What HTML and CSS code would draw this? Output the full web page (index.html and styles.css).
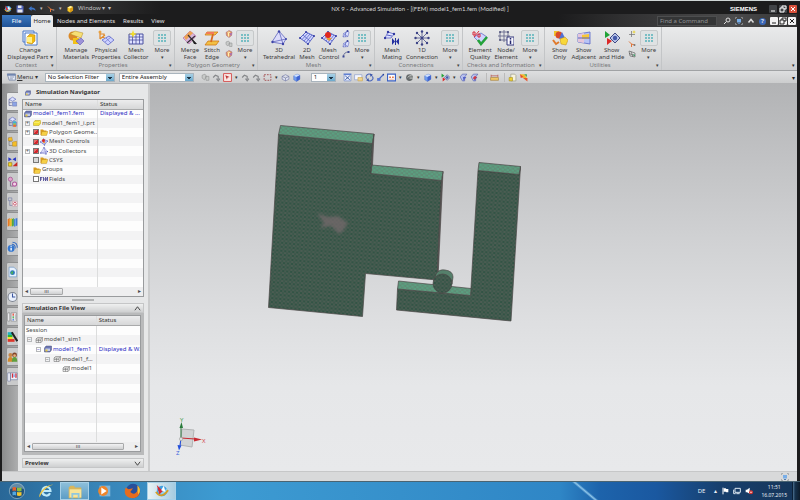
FILE: index.html
```html
<!DOCTYPE html>
<html lang="en">
<head>
<meta charset="utf-8">
<title>NX 9 - Advanced Simulation</title>
<link rel="stylesheet" href="styles.css">
</head>
<body>
<svg class="defs" aria-hidden="true">
  <symbol id="cube" viewBox="0 0 16 16"><path d="M3 5l6-3 5 2v7l-6 4-5-3z" fill="#f5c526" stroke="#a8790d" stroke-width=".6"/><path d="M3 5l5 2 6-3-5-2z" fill="#fff2a0"/><path d="M8 7v8l6-4V4z" fill="#dc9c14"/></symbol>
  <symbol id="bcube" viewBox="0 0 16 16"><path d="M3 5l6-3 5 2v7l-6 4-5-3z" fill="#6f9df0" stroke="#3355b0" stroke-width=".6"/><path d="M3 5l5 2 6-3-5-2z" fill="#cfe0ff"/><path d="M8 7v8l6-4V4z" fill="#3f62cf"/></symbol>
  <symbol id="change" viewBox="0 0 16 16"><path d="M1 1h11v11H1z" fill="#e8efff" stroke="#4a78c8"/><path d="M3 3h12v12H3z" fill="#fff" stroke="#4a78c8"/><path d="M5 7l3-3 5 1v6l-3 3-5-1z" fill="#f2b90f" stroke="#a8790d" stroke-width=".5"/><path d="M5 7h5v6l-5-1z" fill="#fff08a"/></symbol>
  <symbol id="manage" viewBox="0 0 16 16"><circle cx="5" cy="6" r="4.500" fill="#dc8a28"/><path d="M2 4l5-3 8 2-2 5z" fill="#f6df74" stroke="#b58b20" stroke-width=".5"/><path d="M5 8h6v6H5z" fill="#f3c217"/><path d="M8 11l5-3 3 3-4 4z" fill="#9c92d8" stroke="#6158b2" stroke-width=".6"/></symbol>
  <symbol id="physical" viewBox="0 0 16 16"><path d="M4 10l7-4 5 4-6 5z" fill="#cdd2ff" stroke="#6068c8" stroke-width=".8"/><path d="M8 8l5 5M7 12l6-5" stroke="#6068c8" stroke-width=".6"/><path d="M2 1v8M2 4h4v4M2 9l5-4" fill="none" stroke="#e18828" stroke-width="1.200"/><circle cx="2" cy="2" r="1.500" fill="#e8a140"/></symbol>
  <symbol id="collector" viewBox="0 0 16 16"><path d="M1 4h14v10H1z" fill="#dfe2ff" stroke="#4b50a0"/><path d="M1 7h14M1 10h14M4.500 4v10M8 4v10M11.500 4v10" stroke="#4b50a0" stroke-width=".8"/><path d="M5 0l1 3 3 1-3 1-1 3-1-3-3-1 3-1z" fill="#f3dd28"/></symbol>
  <symbol id="more" viewBox="0 0 16 16"><g fill="#2aa3ad"><path d="M3 3h2v2H3zM7 3h2v2H7zM11 3h2v2h-2zM3 7h2v2H3zM7 7h2v2H7zM11 7h2v2h-2zM3 11h2v2H3zM7 11h2v2H7zM11 11h2v2h-2z"/></g></symbol>
  <symbol id="merge" viewBox="0 0 16 16"><path d="M1 8l7-7 6 5-7 8z" fill="#d8b6dc" stroke="#b060a0" stroke-width=".6"/><path d="M2 7l6-6 3 2-7 7z" fill="#eda253"/><path d="M6 5l8 9M13 6l-8 7" stroke="#383038" stroke-width="1.200"/><path d="M9 8l6 6-3 0z" fill="#222"/></symbol>
  <symbol id="stitch" viewBox="0 0 16 16"><path d="M3 2h11l-3 3H1zM4 11h11l-3 4H1z" fill="#f2c044" stroke="#d07818" stroke-width=".8"/><path d="M9 4l-2 8" stroke="#d86a20" stroke-width="1.800"/><path d="M3 2h7v2H2z" fill="#f27a5a"/></symbol>
  <symbol id="ball" viewBox="0 0 16 16"><path d="M2 5l6-4 6 3-1 7-5 4-5-4z" fill="#e6a06c" stroke="#96556c"/><path d="M5 4l5 1M7 6v7" stroke="#fff0b0" stroke-width="2"/><path d="M9 7l5-1-2 6z" fill="#a869b8"/></symbol>
  <symbol id="tetra" viewBox="0 0 16 16"><path d="M8 1L1 12l11 2 3-5z" fill="#dcdcfa" stroke="#6066bd" stroke-width=".8"/><path d="M8 1l4 13M1 12l14-3" stroke="#6066bd" stroke-width=".8"/><g fill="#3d43a8"><circle cx="8" cy="1.500" r="1.200"/><circle cx="1.500" cy="12" r="1.200"/><circle cx="12" cy="14" r="1.200"/><circle cx="15" cy="9" r="1"/></g></symbol>
  <symbol id="mesh" viewBox="0 0 16 16"><path d="M1 8l6-6 8 4-6 8z" fill="#cfd6ff" stroke="#4d58c0" stroke-width=".9"/><path d="M4 5l7 6M5 11l6-7M3 9.500L9 3M7 12.500L13 5" stroke="#4d58c0" stroke-width=".7"/><g fill="#3038a0"><circle cx="1" cy="8" r="1"/><circle cx="7" cy="2" r="1"/><circle cx="15" cy="6" r="1"/><circle cx="9" cy="14" r="1"/></g></symbol>
  <symbol id="control" viewBox="0 0 16 16"><use href="#mesh"/><circle cx="7" cy="5" r="3" fill="#e0281e"/><path d="M5 8l3 3 3-3" fill="#f0a030"/></symbol>
  <symbol id="mating" viewBox="0 0 16 16"><path d="M1 8l3-6 6 2-3 4z" fill="#dfe3ff" stroke="#5a62c4" stroke-width=".8"/><path d="M3 5l5 1" stroke="#5a62c4"/><path d="M8 8v7l3-3.500zM15 8v7l-3-3.500z" fill="#2430a0"/><path d="M11.500 8v7" stroke="#2430a0"/><g fill="#3038a0"><circle cx="1" cy="8" r="1.200"/><circle cx="4" cy="2" r="1.200"/><circle cx="10" cy="4" r="1.200"/></g></symbol>
  <symbol id="star" viewBox="0 0 16 16"><path d="M8 1v14M1 8h14M3 3l10 10M13 3L3 13" stroke="#5d6293" stroke-width=".9"/><g fill="#3b4285"><circle cx="8" cy="1.500" r="1.200"/><circle cx="8" cy="14.500" r="1.200"/><circle cx="1.500" cy="8" r="1.200"/><circle cx="14.500" cy="8" r="1.200"/><circle cx="3" cy="3" r="1.200"/><circle cx="13" cy="3" r="1.200"/><circle cx="3" cy="13" r="1.200"/><circle cx="13" cy="13" r="1.200"/><circle cx="8" cy="8" r="1.500"/></g></symbol>
  <symbol id="quality" viewBox="0 0 16 16"><path d="M2 7l7-4 6 4-6 7z" fill="#cfd3ff" stroke="#5860c0" stroke-width=".7"/><path d="M1 2h2v3H1zM6 4h2v3H6zM7 1L2 7" fill="none" stroke="#d8283c"/><path d="M6 10l3 4 6-7" fill="none" stroke="#23a23a" stroke-width="2.600"/></symbol>
  <symbol id="node" viewBox="0 0 16 16"><path d="M2 2h8v8H2zM6 0v12M0 6h12" fill="none" stroke="#666a8c" stroke-width=".9"/><g fill="#50557c"><circle cx="2" cy="2" r="1"/><circle cx="10" cy="2" r="1"/><circle cx="2" cy="10" r="1"/></g><path d="M9 7h7v8H9z" fill="#f8f8ff" stroke="#34397c"/><path d="M12.500 8v1.500M12.500 10.500V14" stroke="#23266c" stroke-width="1.500"/></symbol>
  <symbol id="only" viewBox="0 0 16 16"><path d="M2 1h5v5H2z" fill="#f0c22c"/><circle cx="7" cy="5" r="3.500" fill="#d94a2a"/><path d="M7 9l3-7 3 6z" fill="#4f70d8"/><path d="M8 9l5-2 3 3-2 5-5-1z" fill="#f7d83a" stroke="#c28b12" stroke-width=".5"/><path d="M1 10l3 4 3-2" fill="none" stroke="#e07a2c" stroke-width="2"/></symbol>
  <symbol id="adjacent" viewBox="0 0 16 16"><path d="M2 4l12-2v12L2 12z" fill="#b8c4f6" stroke="#5565c8" stroke-width=".8"/><path d="M2 4l6-1v10l-6-1z" fill="#e5c6da"/><path d="M6 5l7-1v5H6z" fill="#f8c838"/><path d="M2 8h12" stroke="#5565c8"/></symbol>
  <symbol id="showhide" viewBox="0 0 16 16"><path d="M1 1v7l5-3z" fill="#20a236"/><path d="M3 8l5 3-5 4z" fill="#dc2828"/><path d="M6 8l5-5 5 5-5 5z" fill="#b9c5e8" stroke="#404a86"/><circle cx="11" cy="8" r="2.200" fill="#4459a8"/></symbol>
  <symbol id="tri" viewBox="0 0 16 16"><path d="M2 14l1-7 8-5 3 2-2 9zM3 7l9 6M2 14l9-12M7 4v10" fill="#dde1ff" stroke="#5663bc"/><circle cx="11" cy="2" r="2" fill="#3d469c"/></symbol>
  <symbol id="curve" viewBox="0 0 16 16"><path d="M3 13C3 7 7 4 13 4" fill="none" stroke="#50588c" stroke-width="1.600"/><path d="M1 11h4v4H1zM11 2h4v4h-4z" fill="#3a4694"/></symbol>
  <symbol id="plus" viewBox="0 0 16 16"><path d="M7 2v12M2 9h12" stroke="#777" stroke-width="1.500"/><path d="M12 0l1 3 3 1-3 1-1 3-1-3-3-1 3-1z" fill="#e7cf26"/></symbol>
  <symbol id="orange" viewBox="0 0 16 16"><path d="M2 3l5 5 6 2M7 8v6" fill="none" stroke="#e2763a" stroke-width="2"/><circle cx="13" cy="10" r="2" fill="#777"/></symbol>
  <symbol id="hatch" viewBox="0 0 16 16"><path d="M2 2l12 4v8L4 12zM2 7l11 4M6 3l4 11" fill="#ddd" stroke="#555" stroke-width="1.200"/><path d="M9 9h5v4z" fill="#3fa06a"/></symbol>
  <symbol id="grey" viewBox="0 0 16 16"><path d="M2 4l5-2 3 4-4 6-4-3zM8 6h6v7H9z" fill="#c8cac9" stroke="#8b8d8d"/></symbol>
  <symbol id="greyarrow" viewBox="0 0 16 16"><path d="M2 8l4-4 5 2v5M8 10l3 4 3-4" fill="none" stroke="#85878a" stroke-width="2"/></symbol>
  <symbol id="sel" viewBox="0 0 16 16"><path d="M1 1h14v14H1z" fill="#fbe9e6" stroke="#d4494a" stroke-width="1.600"/><path d="M4 4l8 3-4 1-1 4z" fill="#bb3333"/></symbol>
  <symbol id="dash" viewBox="0 0 16 16"><path d="M2 3h12v10H2z" fill="none" stroke="#a04a4c" stroke-width="1.600" stroke-dasharray="3 2"/></symbol>
  <symbol id="win" viewBox="0 0 16 16"><path d="M1 3h13v9H1z" fill="#f5f7ff" stroke="#8b9ccb" stroke-width="1.200"/><path d="M7 8h8v6H7z" fill="#f1d48a" stroke="#c9a24b"/></symbol>
  <symbol id="fit" viewBox="0 0 16 16"><path d="M2 3h12v11H2z" fill="#edf1ff" stroke="#5577c4"/><path d="M4 5l8 7M12 5l-8 7" stroke="#31529b" stroke-width="1.600"/><path d="M1 1h14v2H1z" fill="#456bd0"/></symbol>
  <symbol id="rot" viewBox="0 0 16 16"><path d="M3 10a5 5 0 0 1 8-6M13 6a5 5 0 0 1-8 6" fill="none" stroke="#4d68ba" stroke-width="2"/><path d="M9 1l5 2-4 4zM7 15l-5-2 4-4z" fill="#3651a8"/></symbol>
  <symbol id="line" viewBox="0 0 16 16"><path d="M5 11l7-7" stroke="#4767c5" stroke-width="2"/><circle cx="13" cy="3" r="1.500" fill="#263f98"/><path d="M2 9h6v5H2z" fill="#5877d4"/></symbol>
  <symbol id="grid" viewBox="0 0 16 16"><path d="M1 2h14v12H1z" fill="#fff" stroke="#3b62c4" stroke-width="2"/><path d="M4 6h3v3H4zM9 6h3v3H9z" fill="#e17745"/><path d="M4 11h8" stroke="#e17745"/></symbol>
  <symbol id="sphere" viewBox="0 0 16 16"><circle cx="8" cy="8" r="6" fill="#666b6c"/><path d="M5 8a6 6 0 0 1 7-3M8 9h6" fill="none" stroke="#dfe2df" stroke-width="1.500"/></symbol>
  <symbol id="poly" viewBox="0 0 16 16"><path d="M2 7l4-5h8l-4 5v7H6z" fill="#b7c0ef" stroke="#4652a5"/><path d="M7 7h6L8 14z" fill="#5462c7"/></symbol>
  <symbol id="cutter" viewBox="0 0 16 16"><use href="#poly"/><path d="M5 9l4-4 3 3-4 4z" fill="#d13a42"/></symbol>
  <symbol id="wire" viewBox="0 0 16 16"><path d="M2 6l6-3 6 3v5l-6 3-6-3zM2 6l6 3 6-3M8 9v5" fill="#dfe2f2" stroke="#626b99"/></symbol>
  <symbol id="ruler" viewBox="0 0 16 16"><path d="M1 8h14v5H1z" fill="#f0c765" stroke="#9d7632"/><path d="M2 5h12M2 3v4M14 3v4" stroke="#b74a40" stroke-width="1.200"/></symbol>
  <symbol id="note" viewBox="0 0 16 16"><path d="M5 2h7l2 2v10H5z" fill="#f5f2dc" stroke="#8d8c74"/><path d="M2 8h6v6H2z" fill="#efd02f" stroke="#a28b22"/></symbol>
  <symbol id="colors" viewBox="0 0 16 16"><path d="M1 2h8l5 7H7z" fill="#f0b72a"/><path d="M2 2l6 5-5 2z" fill="#e54830"/><path d="M7 9h8v6z" fill="#e8552f"/><path d="M9 2h5v5z" fill="#49a648"/></symbol>
  <symbol id="menu" viewBox="0 0 16 16"><path d="M2 3h13v10H5z" fill="#e9eef9" stroke="#56688e"/><path d="M2 3h13v3H2z" fill="#7186af"/><path d="M6 8h7M6 11h5" stroke="#56688e"/></symbol>
  <symbol id="navmesh" viewBox="0 0 16 16"><path d="M3 4l5-3 5 3-5 3z" fill="#dce1ff" stroke="#6871bc"/><path d="M3 4v9M3 9h4M3 13h4" stroke="#555c92" fill="none"/><path d="M8 8h6v6H8z" fill="#8da4e6" stroke="#56659c" stroke-width=".6"/></symbol>
  <symbol id="navcol" viewBox="0 0 16 16"><use href="#navmesh"/><path d="M9 7h4v3H9z" fill="#37b1d6"/><path d="M9 10h4v2H9z" fill="#8dcc37"/><path d="M9 12h4v3H9z" fill="#f06c2c"/></symbol>
  <symbol id="navparts" viewBox="0 0 16 16"><path d="M3 1v12h5M3 7h4" fill="none" stroke="#777"/><path d="M2 2l5-1 1 5H2zM8 8l6-1v7H8z" fill="#f4be27" stroke="#aa7518" stroke-width=".6"/></symbol>
  <symbol id="navbc" viewBox="0 0 16 16"><path d="M2 1v6l5-3zM13 1v6L8 4z" fill="#2534c4"/><path d="M2 9h5v5H2z" fill="#f4d920" stroke="#987b15"/><path d="M8 14h7V8z" fill="#c82b25"/></symbol>
  <symbol id="navpink" viewBox="0 0 16 16"><circle cx="5" cy="4" r="3" fill="#e4a3ce" stroke="#9c4c8b"/><path d="M5 7v7h4" fill="none" stroke="#6d5678"/><circle cx="11" cy="11" r="3" fill="#f4d3e8" stroke="#b05a9d" stroke-width="1.500"/></symbol>
  <symbol id="navred" viewBox="0 0 16 16"><path d="M2 2h5v4H2zM4 6v7h4" fill="none" stroke="#7980a8"/><path d="M8 7h7v7H8z" fill="#fff" stroke="#c89aa4"/><circle cx="11.500" cy="10.500" r="2" fill="#fff" stroke="#c65367" stroke-width="1.400"/></symbol>
  <symbol id="books" viewBox="0 0 16 16"><path d="M1 4l3-2v11l-3 2z" fill="#e77924"/><path d="M4 4l3-2v11l-3 2z" fill="#f0bd24"/><path d="M7 4l3-2v11l-3 2z" fill="#53a840"/><path d="M10 4l5-2v11l-5 2z" fill="#3d7bd0"/><path d="M12 3v11" stroke="#9fc9f6"/></symbol>
  <symbol id="web" viewBox="0 0 16 16"><circle cx="6" cy="10" r="5" fill="#3577cf"/><path d="M6 6v1.500M6 9v4" stroke="#fff" stroke-width="2"/><path d="M7 4q5 0 5 6M8 1q7 0 7 8" fill="none" stroke="#386dc0" stroke-width="1.500"/></symbol>
  <symbol id="page" viewBox="0 0 16 16"><path d="M3 1h7l4 4v10H3z" fill="#e6f1ff" stroke="#6f98c4"/><circle cx="8" cy="9" r="3.500" fill="#2d78bb"/><path d="M5 9l4-3-1 6z" fill="#51b553"/></symbol>
  <symbol id="clock" viewBox="0 0 16 16"><circle cx="8" cy="8" r="6.500" fill="#e9effb" stroke="#7b828e" stroke-width="1.500"/><path d="M8 3v5h4" fill="none" stroke="#3855a0" stroke-width="1.500"/></symbol>
  <symbol id="listi" viewBox="0 0 16 16"><path d="M1 2h3v12H1zM6 2h8v12H6z" fill="#f8f9fc" stroke="#888"/><path d="M8 3h2v3H8z" fill="#e54b39"/><path d="M8 7h2v3H8z" fill="#4ba754"/><path d="M8 11h2v2H8z" fill="#4c76da"/><path d="M12 4v8" stroke="#888"/></symbol>
  <symbol id="spectrum" viewBox="0 0 16 16"><path d="M1 1h7v4H1z" fill="#20b0c0"/><path d="M1 5h7v3H1z" fill="#28b336"/><path d="M1 8h7v3H1z" fill="#f2df24"/><path d="M1 11h10v4H1z" fill="#dc362b"/><path d="M7 1l8 13" stroke="#222" stroke-width="3"/></symbol>
  <symbol id="people" viewBox="0 0 16 16"><circle cx="5" cy="5" r="3" fill="#c88645"/><circle cx="11" cy="5" r="3.500" fill="#81462b"/><path d="M1 15q0-7 4-7t4 7z" fill="#d28a2c"/><path d="M7 15q0-7 4-7t4 7z" fill="#5f9e3e"/><circle cx="11" cy="6" r="2" fill="#e5ae7c"/></symbol>
  <symbol id="gift" viewBox="0 0 16 16"><path d="M1 2h4v12H1zM5 2h10v10H5z" fill="#eef0fa" stroke="#7982a0"/><path d="M7 3h2v6H7zM12 3h2v6h-2z" fill="#d62f38"/><path d="M9 4h3v4H9z" fill="#9fb4e8"/></symbol>
  <symbol id="folder" viewBox="0 0 16 16"><path d="M1 3h5l2 2h5v9H1z" fill="#d99a1c"/><path d="M4 7h12l-3 8H2z" fill="#f5cf45" stroke="#af7912" stroke-width=".7"/></symbol>
  <symbol id="part" viewBox="0 0 16 16"><path d="M1 7l3-4h11v6l-3 4H1z" fill="#f2df35" stroke="#ac9319"/><path d="M2 7h10l3-4" stroke="#fff7a0" fill="none"/></symbol>
  <symbol id="fem" viewBox="0 0 16 16"><path d="M4 2h11v8l-3 4H1V6z" fill="#6c78b4" stroke="#444b78"/><path d="M3 7h9v5H3z" fill="#c4cbed"/><path d="M3 9h4v4H3z" fill="#e3c53a"/></symbol>
  <symbol id="gfem" viewBox="0 0 16 16"><path d="M2 6l3-3h10v7l-3 3H2zM2 6h10v7M12 6l3-3M7 6v7M2 9h10" fill="#eee" stroke="#666"/></symbol>
  <symbol id="fields" viewBox="0 0 16 16"><path d="M1 4v8M1 5h4M1 8h3M7 4v8M7 8h3M11 4v8l4-8v8" fill="none" stroke="#433e8d" stroke-width="1.600"/></symbol>
  <symbol id="disk" viewBox="0 0 16 16"><path d="M1 1h12l2 2v12H1z" fill="#5365b8"/><path d="M4 1h7v5H4zM3 9h10v6H3z" fill="#e6e8ef"/></symbol>
  <symbol id="undo" viewBox="0 0 16 16"><path d="M1 7l6-5v3c6 0 8 3 8 7-2-3-4-3-8-3v3z" fill="#3c75c8"/></symbol>
  <symbol id="nx" viewBox="0 0 16 16"><circle cx="8" cy="8" r="6" fill="#3d9fe0"/><path d="M2 5q3 7 12 0l-2 7H5z" fill="#8fd4f0"/><path d="M2 1l7 7-4 4z" fill="#d62934"/><path d="M7 7l3-5 2 7z" fill="#fff"/><path d="M1 9q6 9 14-2" fill="none" stroke="#d59f25" stroke-width="2"/></symbol>
  <symbol id="target" viewBox="0 0 16 16"><path d="M1 4V1h3M12 1h3v3M15 12v3h-3M4 15H1v-3" fill="none" stroke="#9a9c9e" stroke-width="1.500"/><path d="M4 4h8v7H4z" fill="#79aee7"/><path d="M6 12h4v2H6z" fill="#577cad"/></symbol>
  <symbol id="orb" viewBox="0 0 20 20"><circle cx="10" cy="10" r="8.500" fill="#20537d" stroke="#83a8be"/><path d="M2 8a8 7 0 0 1 16 0q-8-3-16 0" fill="#9ab8c7" opacity=".55"/><path d="M5 6q2-1 4 0v4q-2-1-4 0z" fill="#e7632b"/><path d="M10 6q2 1 5 0v4q-3 1-5 0z" fill="#89bd3f"/><path d="M5 11q2-1 4 0v4q-2-1-4 0z" fill="#53a7df"/><path d="M10 11q2 1 5 0v4q-3 1-5 0z" fill="#f3c72f"/></symbol>
  <symbol id="ie" viewBox="0 0 20 20"><path d="M6 10h9a4.500 4.500 0 0 0-9 0a4.500 4.500 0 0 0 8.500 2.500" fill="none" stroke="#bdeafb" stroke-width="2.400"/><path d="M3 17C1 13 9 3 18 3c-5 1-12 6-15 14" fill="#f0c747"/></symbol>
  <symbol id="explorer" viewBox="0 0 20 20"><path d="M3 5l2-2h4l1 2h7v12H3z" fill="#d8b65c"/><path d="M4 7h13v9H4z" fill="#f7e49a"/><path d="M7 17v-5h7v5" fill="none" stroke="#8fc7df" stroke-width="2"/></symbol>
  <symbol id="media" viewBox="0 0 20 20"><path d="M5 4h12v12H5z" fill="#7eb5da"/><circle cx="9" cy="10" r="5.500" fill="#ed852c"/><path d="M7 6l6 4-6 4z" fill="#fff"/></symbol>
  <symbol id="firefox" viewBox="0 0 20 20"><circle cx="10" cy="10" r="8" fill="#284f9b"/><path d="M2 6l3 2 5-1-3 4q5 5 9-3l-1-4c5 4 3 14-5 14S-1 12 2 6z" fill="#e66c1d"/><path d="M15 4q5 5 1 10l-1-4z" fill="#f6c235"/></symbol>
</svg>

<header class="title">
  <div class="quick">
    <svg><use href="#nx"/></svg><svg><use href="#disk"/></svg><svg><use href="#undo"/></svg><i>▾</i><svg><use href="#orange"/></svg><i>▾</i><svg><use href="#cube"/></svg><span>Window ▾ &nbsp;▾</span>
  </div>
  <h1>NX 9 - Advanced Simulation - [(FEM) model1_fem1.fem (Modified) ]</h1>
  <div class="brand"><b>SIEMENS</b><button class="wbtn dim" aria-label="Minimize"><svg viewBox="0 0 8 8"><path d="M2 6h4"/></svg></button><button class="wbtn dim" aria-label="Restore"><svg viewBox="0 0 8 8"><path d="M3 3V1h4v3H5M1 3h4v4H1z"/></svg></button><button class="wbtn close" aria-label="Close"><svg viewBox="0 0 8 8"><path d="M2 2l4 4M6 2L2 6"/></svg></button></div>
</header>
<nav class="tabs">
  <button class="file">File</button><button class="active">Home</button><button>Nodes and Elements</button><button>Results</button><button>View</button>
  <div class="search"><input type="text" placeholder="Find a Command" aria-label="Find a Command">
    <svg class="ln" viewBox="0 0 16 16"><circle cx="10" cy="6" r="4"/><path d="M7 9l-5 5"/></svg>
    <svg><use href="#target"/></svg>
    <svg class="ln" viewBox="0 0 16 16"><path d="M3 11l5-6 5 6" stroke-width="3"/></svg>
    <span class="help">?</span>
    <span class="docbtns"><button class="wbtn lite" aria-label="Minimize document"><svg viewBox="0 0 8 8"><path d="M2 6h4"/></svg></button><button class="wbtn lite" aria-label="Restore document"><svg viewBox="0 0 8 8"><path d="M3 3V1h4v3H5M1 3h4v4H1z"/></svg></button><button class="wbtn lite" aria-label="Close document"><svg viewBox="0 0 8 8"><path d="M2 2l4 4M6 2L2 6"/></svg></button></span>
  </div>
</nav>

<section class="ribbon">
  <div class="group"><div class="tools">
    <button class="xl"><svg><use href="#change"/></svg>Change<br>Displayed Part ▾</button></div><footer>Context<i>▾</i></footer></div>
  <div class="group"><div class="tools">
    <button class="lg"><svg><use href="#manage"/></svg>Manage<br>Materials</button><button class="lg"><svg><use href="#physical"/></svg>Physical<br>Properties</button><button class="lg"><svg><use href="#collector"/></svg>Mesh<br>Collector</button><button class="sm more"><svg><use href="#more"/></svg>More<br><i>▾</i></button></div><footer>Properties<i>▾</i></footer></div>
  <div class="group"><div class="tools">
    <button class="sm"><svg><use href="#merge"/></svg>Merge<br>Face</button><button class="sm"><svg><use href="#stitch"/></svg>Stitch<br>Edge</button><div class="stack"><svg><use href="#ball"/></svg><svg><use href="#grey"/></svg><svg><use href="#ball"/></svg></div><button class="sm more"><svg><use href="#more"/></svg>More<br><i>▾</i></button></div><footer>Polygon Geometry<i>▾</i></footer></div>
  <div class="group"><div class="tools">
    <button class="wd"><svg><use href="#tetra"/></svg>3D<br>Tetrahedral</button><button class="sm"><svg><use href="#mesh"/></svg>2D<br>Mesh</button><button class="sm"><svg><use href="#control"/></svg>Mesh<br>Control</button><div class="stack"><svg><use href="#tri"/></svg><svg><use href="#tri"/></svg><svg><use href="#curve"/></svg></div><button class="sm more"><svg><use href="#more"/></svg>More<br><i>▾</i></button></div><footer>Mesh<i>▾</i></footer></div>
  <div class="group"><div class="tools">
    <button class="md"><svg><use href="#mating"/></svg>Mesh<br>Mating</button><button class="wd"><svg><use href="#star"/></svg>1D<br>Connection</button><button class="sm more"><svg><use href="#more"/></svg>More<br><i>▾</i></button></div><footer>Connections<i>▾</i></footer></div>
  <div class="group"><div class="tools">
    <button class="md"><svg><use href="#quality"/></svg>Element<br>Quality</button><button class="md"><svg><use href="#node"/></svg>Node/<br>Element</button><button class="sm more"><svg><use href="#more"/></svg>More<br><i>▾</i></button></div><footer>Checks and Information<i>▾</i></footer></div>
  <div class="group"><div class="tools">
    <button class="sm"><svg><use href="#only"/></svg>Show<br>Only</button><button class="md"><svg><use href="#adjacent"/></svg>Show<br>Adjacent</button><button class="lg"><svg><use href="#showhide"/></svg>Show<br>and Hide</button><div class="stack"><svg><use href="#plus"/></svg><svg><use href="#orange"/></svg><svg><use href="#hatch"/></svg></div><button class="sm more"><svg><use href="#more"/></svg>More<br><i>▾</i></button></div><footer>Utilities<i>▾</i></footer></div>
  <i class="end">▾</i>
</section>

<section class="bar">
  <button class="menu"><svg><use href="#menu"/></svg><span><u>M</u>enu ▾</span></button>
  <select class="filter" aria-label="Selection filter"><option>No Selection Filter</option></select>
  <select class="scope" aria-label="Selection scope"><option>Entire Assembly</option></select>
  <div class="icons"><svg><use href="#grey"/></svg><svg><use href="#greyarrow"/></svg><svg><use href="#sel"/></svg><i>▾</i><svg><use href="#greyarrow"/></svg><svg><use href="#greyarrow"/></svg><svg><use href="#dash"/></svg><i>▾</i><svg><use href="#wire"/></svg><svg><use href="#bcube"/></svg></div>
  <select class="layer" aria-label="Work layer"><option>1</option></select>
  <div class="icons"><svg><use href="#fit"/></svg><svg><use href="#win"/></svg><svg><use href="#rot"/></svg><svg><use href="#line"/></svg><svg><use href="#grid"/></svg><i>▾</i><svg><use href="#sphere"/></svg><i>▾</i><svg><use href="#bcube"/></svg><i>▾</i><svg><use href="#showhide"/></svg><i>▾</i><svg><use href="#poly"/></svg><svg><use href="#cutter"/></svg></div>
  <div class="icons sep"><svg><use href="#ruler"/></svg></div>
  <div class="icons sep"><svg><use href="#note"/></svg><svg><use href="#colors"/></svg></div>
  <i class="end">▾</i>
</section>

<main>
  <aside class="rail">
    <button aria-label="Simulation Navigator" class="on"><svg><use href="#navmesh"/></svg></button><button aria-label="Results"><svg><use href="#navcol"/></svg></button><button aria-label="Parts"><svg><use href="#navparts"/></svg></button><button aria-label="Constraints"><svg><use href="#navbc"/></svg></button><button aria-label="Loads"><svg><use href="#navpink"/></svg></button><button aria-label="Objects"><svg><use href="#navred"/></svg></button><button aria-label="Reuse library"><svg><use href="#books"/></svg></button>
    <button aria-label="Information" class="gap"><svg><use href="#web"/></svg></button><button aria-label="Web page" class="gap"><svg><use href="#page"/></svg></button><button aria-label="History" class="gap"><svg><use href="#clock"/></svg></button>
    <button aria-label="Templates"><svg><use href="#listi"/></svg></button><button aria-label="Colours"><svg><use href="#spectrum"/></svg></button><button aria-label="Roles"><svg><use href="#people"/></svg></button><button aria-label="Scenarios"><svg><use href="#gift"/></svg></button>
  </aside>
  <aside class="panel">
    <h2><svg><use href="#fem"/></svg>Simulation Navigator</h2>
    <div class="box upper">
      <table>
        <thead><tr><th>Name</th><th>Status</th></tr></thead>
        <tbody>
          <tr class="blue"><td><div><svg><use href="#fem"/></svg>model1_fem1.fem</div></td><td>Displayed &amp; ...</td></tr>
          <tr><td><div><s>+</s><svg><use href="#part"/></svg>model1_fem1_i.prt</div></td><td></td></tr>
          <tr><td><div><s>+</s><input type="checkbox" checked aria-label="Polygon Geometry"><svg><use href="#folder"/></svg>Polygon Geome...</div></td><td></td></tr>
          <tr><td><div><s class="no"></s><input type="checkbox" checked aria-label="Mesh Controls"><svg><use href="#control"/></svg>Mesh Controls</div></td><td></td></tr>
          <tr><td><div><s>+</s><input type="checkbox" checked aria-label="3D Collectors"><svg><use href="#tetra"/></svg>3D Collectors</div></td><td></td></tr>
          <tr><td><div><s class="no"></s><input type="checkbox" class="off" checked aria-label="CSYS"><svg><use href="#folder"/></svg>CSYS</div></td><td></td></tr>
          <tr><td><div><s class="no"></s><svg><use href="#folder"/></svg>Groups</div></td><td></td></tr>
          <tr><td><div><s class="no"></s><input type="checkbox" aria-label="Fields"><svg><use href="#fields"/></svg>Fields</div></td><td></td></tr>
          <tr><td></td><td></td></tr><tr><td></td><td></td></tr><tr><td></td><td></td></tr><tr><td></td><td></td></tr><tr><td></td><td></td></tr><tr><td></td><td></td></tr><tr><td></td><td></td></tr><tr><td></td><td></td></tr><tr><td></td><td></td></tr><tr><td></td><td></td></tr><tr><td></td><td></td></tr>
        </tbody>
      </table>
      <div class="scroll"><i>◂</i><span class="short">ııı</span><i>▸</i></div>
    </div>
    <div class="grip"></div>
    <h3>Simulation File View<svg viewBox="0 0 8 8"><path d="M1 6l3-4 3 4"/></svg></h3>
    <div class="frame"><div class="box">
      <table>
        <thead><tr><th>Name</th><th>Status</th></tr></thead>
        <tbody>
          <tr><td><div>Session</div></td><td></td></tr>
          <tr><td><div><s>−</s><svg><use href="#gfem"/></svg>model1_sim1</div></td><td></td></tr>
          <tr class="blue"><td><div class="l1"><s>−</s><svg><use href="#fem"/></svg>model1_fem1</div></td><td>Displayed &amp; W.</td></tr>
          <tr><td><div class="l2"><s>−</s><svg><use href="#gfem"/></svg>model1_f...</div></td><td></td></tr>
          <tr><td><div class="l3"><s class="no"></s><svg><use href="#gfem"/></svg>model1</div></td><td></td></tr>
          <tr><td></td><td></td></tr><tr><td></td><td></td></tr><tr><td></td><td></td></tr><tr><td></td><td></td></tr><tr><td></td><td></td></tr><tr><td></td><td></td></tr><tr><td></td><td></td></tr>
        </tbody>
      </table>
      <div class="scroll"><i>◂</i><span class="long">ııı</span><i>▸</i></div>
    </div></div>
    <h3 class="preview">Preview<svg viewBox="0 0 8 8"><path d="M1 2l3 4 3-4"/></svg></h3>
  </aside>
  <section class="view">
    <svg viewBox="150 84 647 387" preserveAspectRatio="xMinYMin meet" role="img" aria-label="Meshed model">
      <defs>
        <pattern id="dark" width="4" height="4" patternUnits="userSpaceOnUse" patternTransform="rotate(6)"><rect width="4" height="4" fill="#325445"/><path d="M0 0l2 2 2-2M0 4l2-2 2 2M0 2h4" fill="none" stroke="#5c635a" stroke-width=".5"/></pattern>
        <pattern id="light" width="5" height="4" patternUnits="userSpaceOnUse" patternTransform="rotate(6)"><rect width="5" height="4" fill="#5b9f80"/><path d="M0 0l3 2 2-2M0 4l3-2 2 2" fill="none" stroke="#64776b" stroke-width=".5"/></pattern>
        <filter id="soft"><feGaussianBlur stdDeviation="1.500"/></filter>
      </defs>
      <g stroke="#4a4646" stroke-width=".7" stroke-linejoin="round">
        <path fill="url(#dark)" d="M278.500 134.500l94 9-1.500 30 70.500 7L437 280l-71.500-6.500-3 43-94-9z"/>
        <path fill="url(#light)" d="M280.500 125.500l93.500 8.500-1.500 9.500-94-9z"/>
        <path fill="#62605e" d="M374 134l-1.500 31-1.500 8.500 1.500-30zM443 171.500L438 278l-1 2 4.500-99.500z"/>
        <path fill="url(#light)" d="M372 165l71 6.500-1.500 9-70.500-7z"/>
        <path fill="url(#dark)" d="M478 170.500l41 4 1.500-8L511 321l-114.500-11 1-21 73 6.500z"/>
        <path fill="url(#light)" d="M479 162.500l41.500 4-1.500 8-41-4zM398.500 281l72.500 7.500-.5 7-73-6.500z"/>
        <path fill="#55806b" d="M434 281l2-7q3-5 9-4 8 1 8 7l-1 7-9 5z"/>
        <circle cx="442.500" cy="283.500" r="9.500" fill="url(#dark)"/>
      </g>
      <path d="M317 213l11 4 10-1 10 7-5 8-4 3-8-8-11 2 4-5z" fill="#74696c" opacity=".75" filter="url(#soft)"/>
      <path d="M182 429l12 1-2 17-12-2z" fill="#d1d3d4" stroke="#b2b4b5"/>
      <path d="M181 438l14 1" stroke="#c82a32"/><path d="M194 437.500l8 2-8 2z" fill="#c82a32"/>
      <path d="M181 438v-11" stroke="#28743a"/><path d="M179.500 428l2-6 1.500 6z" fill="#287a3a"/>
      <path d="M181 438l-1 8" stroke="#224edb" stroke-width="1"/><path d="M177.500 445l4 .5-2.500 5z" fill="#224edb"/>
      <circle cx="181" cy="439" r="1.700" fill="#ddd" stroke="#999" stroke-width=".5"/>
      <g class="axis"><text x="202" y="443" fill="#d34a50">X</text><text x="180" y="422" fill="#3f9a4e">Y</text><text x="176" y="455" fill="#3c64dd">Z</text></g>
    </svg>
  </section>
</main>
<div class="status"><svg><use href="#target"/></svg></div>
<footer class="taskbar">
  <button aria-label="Start"><svg><use href="#orb"/></svg></button><button aria-label="Internet Explorer"><svg><use href="#ie"/></svg></button><button class="open" aria-label="Explorer"><svg><use href="#explorer"/></svg></button><button aria-label="Media Player"><svg><use href="#media"/></svg></button><button aria-label="Firefox"><svg><use href="#firefox"/></svg></button><button class="open cur" aria-label="NX"><svg><use href="#nx"/></svg></button>
  <div class="tray"><span>DE</span><i>▴</i>
    <svg viewBox="0 0 12 12"><path d="M3 1v10" stroke="#fff" stroke-width="1.500"/><path d="M4 2h3l1 1h3v5H8L7 7H4z" fill="#fff"/></svg>
    <svg viewBox="0 0 12 12"><path d="M3 2h8v6H3zM5 10h5M1 4v6h3" fill="none" stroke="#dde8f2" stroke-width="1.500"/></svg>
    <svg viewBox="0 0 12 12"><path d="M1 4h2l4-3v9L3 8H1z" fill="#fff"/><circle cx="9" cy="8" r="3" fill="#d63631"/><path d="M8 7l2 2M10 7l-2 2" stroke="#fff"/></svg>
    <time>11:51<br>16.07.2015</time></div>
  <div class="peek"></div>
</footer>
</body>
</html>
```
FILE: styles.css
```css
* { box-sizing: border-box; }
body {
  margin: 0; height: 100vh; padding: 0 3px 0 2px; display: flex; flex-direction: column;
  background: #1c1c1d; color: #333; overflow: hidden;
  font: 6px/7px "Noto Sans", "Open Sans", sans-serif;
}
button, input, select { font: inherit; color: inherit; margin: 0; padding: 0; border: 0; background: none; border-radius: 0; }
i, s { font-style: normal; text-decoration: none; }
svg { width: 10px; height: 10px; flex: none; }
.defs { position: absolute; width: 0; height: 0; }
h1, h2, h3 { margin: 0; font-size: 6px; }

.title {
  display: grid; grid-template-columns: 1fr auto 1fr; align-items: center; height: 14px; padding-top: 2px;
  margin: 0 -3px 0 -2px; border-top: 1px solid #cfd6d6; color: #c2c2c2;
  background: linear-gradient(90deg, #1d1d1e, #3a3a3b 8%, #1c1c1d 20%);
}
.title h1 { font: 400 6px/7px Lato, "Open Sans", sans-serif; color: #d6d6d6; padding-left: 40px; }
.quick { display: flex; align-items: center; gap: 4px; padding-left: 4px; }
.quick svg { width: 8px; height: 8px; }
.quick i { font-size: 5px; }
.brand { display: flex; align-items: center; justify-content: flex-end; gap: 2px; padding-right: 3px; }
.brand b { font: 700 6px/8px "Liberation Sans", sans-serif; color: #fff; margin-right: 10px; }
.wbtn { width: 8px; height: 8px; display: grid; place-items: center; border-radius: 1px; }
.wbtn svg { width: 8px; height: 8px; fill: none; stroke: #fff; stroke-width: 1; }
.wbtn.dim { background: #414447; }
.wbtn.close { background: #d8523c; }
.wbtn.lite { background: #f2f2f2; }
.wbtn.lite svg { stroke: #222; }

.tabs { display: flex; height: 13px; padding-top: 1px; color: #e2e2e2; background: linear-gradient(90deg, #1c1c1d 70%, #303031 78%, #4b4b4c 92%, #333 100%); }
.tabs > button { padding: 0 4px; }
.tabs .file { width: 29px; color: #fff; background: linear-gradient(#3c79bf, #205296); }
.tabs .active { width: 22px; padding: 0; background: #e9eaeb; color: #222; border-radius: 2px 2px 0 0; }
.search { display: flex; align-items: center; margin-left: auto; gap: 4px; padding-right: 1px; }
.search input { width: 60px; height: 10px; padding: 0 2px; background: #343536; border: 1px solid #4d4e4f; margin-right: 2px; }
.search input::placeholder { color: #929495; }
.search svg { width: 8px; height: 8px; }
.search .ln { fill: none; stroke: #ddd; stroke-width: 2; }
.help { width: 7px; height: 7px; border-radius: 50%; background: #3b68b8; text-align: center; font-weight: 700; }
.docbtns { display: flex; gap: 1px; }

.ribbon { display: flex; height: 44px; background: linear-gradient(#e9eaeb, #dadbdc 60%, #cdced0); border-bottom: 1px solid #a0a2a4; position: relative; }
.group { display: flex; flex-direction: column; justify-content: space-between; padding: 3px 1px 1px 4px; border-right: 1px solid #c3c5c7; }
.group:first-child { padding-left: 3px; }
.tools { display: flex; align-items: flex-start; }
.tools button { display: block; color: #3b3b3c; text-align: center; white-space: nowrap; flex: none; }
.tools button svg { display: block; width: 16px; height: 16px; margin: 0 auto 1px; }
.xl { width: 50px; }
.wd { width: 34px; }
.lg { width: 30px; }
.md { width: 26px; }
.sm { width: 22px; }
.tools .more svg { border: 1px solid #c6c9ca; background: #dfe2e3; border-radius: 2px; width: 18px; padding: 1px; }
.tools i, .ribbon .end { font-size: 5px; }
.stack { display: flex; flex-direction: column; gap: 2px; width: 11px; align-items: center; }
.stack svg { width: 8px; height: 8px; }
.group footer { display: flex; justify-content: center; color: #77797b; position: relative; padding-right: 8px; }
.group footer i { position: absolute; right: 1px; font-size: 5px; color: #444; }
.end { position: absolute; right: 2px; bottom: 1px; color: #222; }

.bar { display: flex; align-items: center; height: 13px; padding-left: 4px; gap: 4px; background: linear-gradient(#dedfe0, #cccdce); border-bottom: 1px solid #b2b3b5; position: relative; }
.menu { display: flex; align-items: center; gap: 1px; padding-right: 3px; }
.bar select { height: 9px; padding: 0 2px; border: 1px solid #a9b4bd; color: #222; appearance: none;
  background: linear-gradient(45deg, transparent 50%, #1d3342 50%) right 4px top 3px / 3px 2px no-repeat,
    linear-gradient(-45deg, transparent 50%, #1d3342 50%) right 1px top 3px / 3px 2px no-repeat,
    linear-gradient(#a8d1e6, #6ca9cc) right / 8px 100% no-repeat, #fdfdfd; }
.filter { width: 70px; }
.scope { width: 75px; }
.bar .layer { width: 25px; margin-left: 3px; }
.icons { display: flex; align-items: center; gap: 2px; padding: 0 3px; }
.icons i { width: 5px; font-size: 5px; text-align: center; }
.icons svg { width: 9px; height: 9px; }
.icons.sep { border-left: 1px solid #bbb; padding: 0 1px 0 3px; }

main { flex: 1; display: flex; min-height: 0; }
.rail { width: 16px; padding: 8px 0 0 4px; background: linear-gradient(90deg, #8b8c8d, #adaeaf); display: flex; flex-direction: column; gap: 1px; }
.rail button { height: 19px; display: grid; place-items: center; background: #c9cacb; border: 1px solid #8f9091; border-right: 0; border-radius: 2px 0 0 2px; }
.rail .on { background: #e6e7e8; }
.rail .gap { margin-top: 5px; }
.rail svg { width: 11px; height: 12px; }

.panel { width: 132px; padding: 2px 4px 3px; background: #e6e7e8; border-right: 2px solid #cbcccd; display: flex; flex-direction: column; color: #4a4a4b; }
.panel h2 { display: flex; align-items: center; gap: 5px; height: 13px; padding-left: 3px; color: #333; }
.panel h2 svg { width: 6px; height: 6px; }
.box { background: #fdfdfd; border: 1px solid #999b9d; overflow: hidden; display: flex; flex-direction: column; }
.upper { height: 198px; }
table { border-collapse: collapse; table-layout: fixed; width: 100%; flex: 1; height: 100%; }
th { text-align: left; font-weight: 400; color: #333; background: linear-gradient(#ececed, #d6d7d8); border-bottom: 1px solid #a9aaab; padding: 0 2px; }
th + th, td + td { border-left: 1px solid #dcdddd; }
td, th { padding: 0 0 0 2px; height: 9px; white-space: nowrap; overflow: hidden; line-height: 7px; }
th:first-child { width: 62%; }
td:first-child { padding: 0 0 0 1px; }
tr:nth-child(even) td { background: #f3f3f4; }
td div { display: flex; align-items: center; gap: 1px; }
td svg { width: 8px; height: 8px; }
td s { width: 5px; height: 5px; border: 1px solid #b6b8ba; line-height: 3px; text-align: center; margin: 0 2px 0 1px; flex: none; font-size: 5px; }
td s.no { border-color: transparent; }
.blue td { color: #2b2bc4; }
.l1 { padding-left: 9px; }
.l2 { padding-left: 18px; }
.l3 { padding-left: 27px; }
td input { appearance: none; width: 6px; height: 6px; border: 1px solid #777; background: #fff; flex: none; }
td input:checked { background: linear-gradient(135deg, transparent 45%, #d3262c 45% 75%, transparent 75%), #e46a6a; }
td input.off:checked { background: #d8d8d8; }
.scroll { display: flex; align-items: center; height: 9px; flex: none; padding: 0 2px; background: #eeeeef; gap: 2px; }
.scroll span { height: 7px; border: 1px solid #a8a9aa; border-radius: 1px; background: linear-gradient(#f2f2f3, #cfd0d1); text-align: center; line-height: 4px; }
.scroll i:last-child { margin-left: auto; }
.short { width: 33px; }
.long { width: 92px; }
.grip { width: 22px; height: 2px; margin: 2px auto; background: #b1b3b4; }
.panel h3 { display: flex; align-items: center; justify-content: space-between; height: 10px; padding: 0 2px; color: #333; background: linear-gradient(#eff0f0, #cfd0d1); border: 1px solid #c5c6c7; }
h3 svg { width: 7px; height: 7px; fill: none; stroke: #333; }
.frame { flex: 1; min-height: 0; padding: 2px 3px 3px 2px; background: #b9babb; display: flex; }
.frame .box { width: 100%; }
.panel .preview { margin-top: 3px; }

.view { flex: 1; min-width: 0; background: linear-gradient(#b2b3b5, #bebfc1 15%, #d0d1d3 40%, #dddee0 60%, #e6e7e9 78%, #e8e9eb); }
.view svg { display: block; width: 100%; height: 100%; }
.axis { font: 6px "Noto Sans", sans-serif; }

.status { height: 10px; background: #d8d9da; border-top: 1px solid #c6c7c8; display: flex; justify-content: flex-end; align-items: center; padding-right: 8px; }
.status svg { width: 8px; height: 8px; }
.taskbar { display: flex; height: 19px; margin: 0 -3px 0 -2px; padding-left: 2px; border-top: 1px solid #4b6472;
  background: linear-gradient(50deg, transparent 45%, #9fd0ee 50%, transparent 56%) 572px 0 / 26px 100% no-repeat, linear-gradient(90deg, #296797, #3784b7 12%, #3d9bd2 28%, #3690cb 50%, #2f86c6 70%, #1d63ab 75%, #1a58a0 82%, #173f6d 90%, #163558);
  background: linear-gradient(40deg, transparent 44%, #8fc6ea 50%, transparent 56%) 572px 0 / 26px 100% no-repeat, linear-gradient(90deg, #296797, #3784b7 12%, #3d9bd2 28%, #3690cb 50%, #2f86c6 70%, #1d63ab 75%, #1a58a0 82%, #173f6d 90%, #163558); }
.taskbar > button { width: 29px; display: grid; place-items: center; }
.taskbar > button svg { width: 18px; height: 18px; }
.taskbar .open { border: 1px solid #a6d0e8; background: linear-gradient(#8dbfda, #5c9dc5); }
.taskbar .cur { background: linear-gradient(90deg, #e9f2f4, #a6cbe0); }
.taskbar .cur svg { width: 14px; height: 14px; }
.tray { margin-left: auto; display: flex; align-items: center; gap: 4px; color: #eaf1f7; padding-right: 5px; }
.tray svg { width: 8px; height: 8px; }
.tray span { margin-right: 5px; }
.tray time { font-size: 5px; text-align: center; line-height: 8px; margin-left: 4px; }
.peek { width: 8px; background: linear-gradient(90deg, #4e7291, #16324d 30%, #0e1c2b); border-left: 1px solid #0c2138; }
```
